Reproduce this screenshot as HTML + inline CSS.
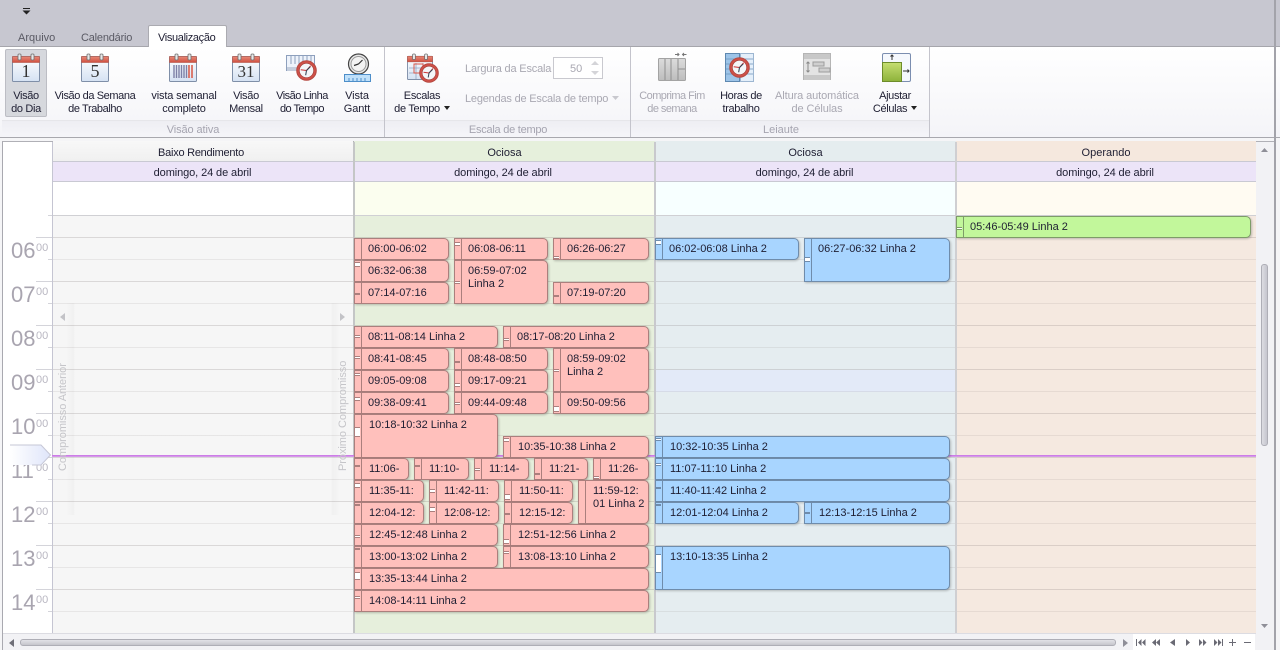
<!DOCTYPE html>
<html lang="pt"><head><meta charset="utf-8"><title>Agenda</title>
<style>
html,body{margin:0;padding:0;width:1280px;height:650px;overflow:hidden;background:#f5f5f7}
body{position:relative;font:11px/13px "Liberation Sans",sans-serif;color:#1e1e32}
div,span,svg{position:absolute;box-sizing:border-box}
.t{white-space:nowrap}
.c{text-align:center;white-space:nowrap;letter-spacing:-.35px;top:90px}
.g{color:#a9a8b2}
.cap{color:#a5a4b0;top:124px;white-space:nowrap;text-align:center}
.sep{top:47px;width:1px;height:90px;background:#c4c4cc}
.h{height:21px;text-align:center;line-height:22px;padding-top:1px;top:141px;border-bottom:1px solid #c9c9d3}
.d{height:20px;text-align:center;line-height:22px;top:162px;background:#ece4f8;border-bottom:1px solid #c9c9d3;letter-spacing:-.1px}
.a{top:182px;height:34px;border-bottom:1px solid #d0d0d4}
.b{top:216px;height:417px}
.hr{font-size:22px;line-height:22px;color:#a9a5b0;left:11px}
.mn{font-size:11px;line-height:11px;color:#b9b7c2;left:36px}
.e{height:22px;border:1px solid;border-radius:0 5px 5px 0;box-shadow:1px 1px 2px rgba(0,0,0,.22);padding:4px 0 0 13px;line-height:13px;overflow:hidden;white-space:nowrap}
.r{background:#ffc0bc;border-color:#ab7f7d}
.u{background:#a8d5ff;border-color:#6f8cab}
.n{background:#c2f79b;border-color:#7d9c68}
.e i{position:absolute;left:0;top:0;bottom:0;width:6px;border-right:1px solid;border-color:inherit;background:inherit}
.e b{position:absolute;left:0;width:5px;background:#fff;border-top:1px solid;border-bottom:1px solid;border-color:inherit;box-sizing:content-box}
.ar{position:static;display:inline-block;width:0;height:0;border:3.5px solid transparent;border-top:4px solid #222;border-bottom:0;margin-left:4px;vertical-align:2px}
</style></head><body>

<svg width="0" height="0" style="left:0;top:0">
<defs>
<linearGradient id="pg" x1="0" y1="0" x2="0" y2="1"><stop offset="0" stop-color="#fff"/><stop offset="1" stop-color="#d5e2f3"/></linearGradient>
<linearGradient id="rd" x1="0" y1="0" x2="0" y2="1"><stop offset="0" stop-color="#e88a78"/><stop offset="1" stop-color="#cf4f40"/></linearGradient>
<linearGradient id="gb" x1="0" y1="0" x2="0" y2="1"><stop offset="0" stop-color="#c6de72"/><stop offset="1" stop-color="#8db23a"/></linearGradient>
<linearGradient id="gy" x1="0" y1="0" x2="0" y2="1"><stop offset="0" stop-color="#dcdcdc"/><stop offset="1" stop-color="#bdbdbd"/></linearGradient>
<symbol id="cal" viewBox="0 0 28 29">
<rect x=".5" y="3.5" width="27" height="25" rx="1" fill="url(#pg)" stroke="#7f8fa8"/>
<rect x=".5" y="3.5" width="27" height="6" fill="url(#rd)" stroke="#b4574a" stroke-width=".6"/>
<rect x="6" y="1" width="3" height="6" rx="1" fill="#e8e8e8" stroke="#6d6d6d" stroke-width=".8"/>
<rect x="19" y="1" width="3" height="6" rx="1" fill="#e8e8e8" stroke="#6d6d6d" stroke-width=".8"/>
</symbol>
<symbol id="clk" viewBox="0 0 20 20">
<circle cx="10" cy="10" r="9.3" fill="#cf5048" stroke="#b54a42"/>
<circle cx="10" cy="10" r="6.8" fill="#f4f6f8" stroke="#a0403a" stroke-width=".6"/>
<path d="M10 10 L14 5.5 M10 10 L4.5 9.3" stroke="#c33" stroke-width="1" fill="none"/>
<path d="M10 10 L9.2 14.5 M10 10 L13.5 6.5" stroke="#345" stroke-width="1" fill="none"/>
</symbol>
</defs></svg>

<!-- title area -->
<div style="left:0;top:0;width:1280px;height:47px;background:#c7c7d0;border-bottom:1px solid #a6a6ac"></div>
<svg style="left:22px;top:8px" width="9" height="7"><path d="M1 .5H8" stroke="#222"/><path d="M.5 2.5H8.5L4.5 6.5Z" fill="#222"/></svg>
<div class="t" style="left:18px;top:32px;color:#5a5a64">Arquivo</div>
<div class="t" style="left:81px;top:32px;color:#5a5a64;letter-spacing:-.2px">Calendário</div>
<div style="left:148px;top:25px;width:79px;height:23px;background:#fff;border:1px solid #ababb1;border-bottom:0;border-radius:2px 2px 0 0"></div>
<div class="t" style="left:158px;top:32px;letter-spacing:-.35px">Visualização</div>

<!-- ribbon -->
<div style="left:0;top:47px;width:1280px;height:91px;background:linear-gradient(#fff,#f4f4f8);border-bottom:1px solid #a8a8ae"></div>
<div style="left:2px;top:120px;width:927px;height:17px;background:linear-gradient(#eeeef3,#f5f5f9);border-top:1px solid #e6e6ea"></div>
<div class="sep" style="left:384px"></div><div class="sep" style="left:630px"></div><div class="sep" style="left:929px"></div>
<div style="left:5px;top:49px;width:42px;height:68px;background:#d6d8dd;border:1px solid #bcbdc4;border-radius:2px"></div>

<svg style="left:12px;top:53px" width="28" height="29"><use href="#cal"/><text x="14" y="24" text-anchor="middle" font-family="Liberation Serif" font-size="18" fill="#333">1</text></svg>
<svg style="left:81px;top:53px" width="28" height="29"><use href="#cal"/><text x="14" y="24" text-anchor="middle" font-family="Liberation Serif" font-size="18" fill="#333">5</text></svg>
<svg style="left:169px;top:53px" width="28" height="29"><use href="#cal"/><path d="M5 12v13M7.5 12v13M10 12v13M12.5 12v13M15 12v13M17.5 12v13" stroke="#7d80a6" stroke-width="1.4"/><path d="M20 12v13M23 12v13" stroke="#d9604f" stroke-width="1.6"/></svg>
<svg style="left:232px;top:53px" width="28" height="29"><use href="#cal"/><text x="14" y="24" text-anchor="middle" font-family="Liberation Serif" font-size="17" fill="#333">31</text></svg>
<svg style="left:286px;top:53px" width="33" height="30"><rect x=".5" y="2.5" width="28" height="15" fill="#eef3fb" stroke="#8ea0bd"/><path d="M5 3v8M9 3v8M13 3v8M17 3v8M21 3v8M25 3v8" stroke="#8ea0bd"/><rect x="1" y="14" width="27" height="4" fill="#c5cedd"/><svg x="10" y="7" width="21" height="21"><use href="#clk"/></svg></svg>
<svg style="left:344px;top:53px" width="28" height="30"><circle cx="14.500" cy="11" r="10" fill="#e7e7e7" stroke="#444" stroke-width="1.200"/><circle cx="14.500" cy="11" r="7.500" fill="#f3f3f3" stroke="#999"/><path d="M14.500 11L18.500 7M14.500 11L10 12.500" stroke="#333" stroke-width="1.200" fill="none"/><rect x=".5" y="21.500" width="26" height="7" fill="#bfe0fa" stroke="#4d8ec9"/><path d="M5 25v3M9 25v3M13 25v3M17 25v3M21 25v3" stroke="#4d8ec9"/></svg>
<svg style="left:407px;top:53px" width="32" height="30"><use href="#cal" width="26" height="27"/><path d="M2 15H24M2 20H24M9 10V26M16 10V26" stroke="#93a5c2" stroke-width=".8"/><rect x="7" y="11" width="9" height="9" fill="none" stroke="#d9584a"/><svg x="12" y="10" width="20" height="20"><use href="#clk"/></svg></svg>

<div class="c" style="left:5px;width:42px">Visão<br>do Dia</div>
<div class="c" style="left:50px;width:90px;letter-spacing:-.4px">Visão da Semana<br>de Trabalho</div>
<div class="c" style="left:144px;width:80px;letter-spacing:-.15px">vista semanal<br>completo</div>
<div class="c" style="left:226px;width:40px;letter-spacing:-.3px">Visão<br>Mensal</div>
<div class="c" style="left:270px;width:64px;letter-spacing:-.5px">Visão Linha<br>do Tempo</div>
<div class="c" style="left:337px;width:40px;letter-spacing:-.1px">Vista<br>Gantt</div>
<div class="c" style="left:392px;width:60px;letter-spacing:-.3px">Escalas<br>de Tempo<span class="ar"></span></div>
<div class="cap" style="left:143px;width:100px;letter-spacing:-.1px">Visão ativa</div>
<div class="cap" style="left:458px;width:100px;letter-spacing:-.25px">Escala de tempo</div>
<div class="cap" style="left:731px;width:100px">Leiaute</div>

<div class="t g" style="left:465px;top:63px;letter-spacing:-.18px">Largura da Escala</div>
<div style="left:553px;top:57px;width:50px;height:22px;background:#fff;border:1px solid #c9c9cf"></div>
<div class="t g" style="left:570px;top:63px">50</div>
<svg style="left:590px;top:60px" width="10" height="16"><path d="M5 1L9 5H1ZM5 15L1 11H9Z" fill="#d4d4d8"/></svg>
<div class="t g" style="left:465px;top:93px;letter-spacing:-.2px">Legendas de Escala de tempo</div>
<svg style="left:611px;top:96px" width="9" height="5"><path d="M1 0H8L4.500 4Z" fill="#c8c8ce"/></svg>

<svg style="left:658px;top:52px" width="30" height="30"><path d="M17 2.500h4M19.500 1l1.500 1.500L19.500 4M28.500 2.500h-4M26 1l-1.500 1.500L26 4" stroke="#777" fill="none"/><rect x=".5" y="6.500" width="27" height="22" rx="1" fill="url(#gy)" stroke="#a3a3a3"/><path d="M7 7v21M13 7v21M20 7v21M20 17H27" stroke="#8f8f8f"/></svg>
<svg style="left:725px;top:53px" width="30" height="30"><rect x=".5" y=".5" width="14" height="28" fill="#9dc4e8" stroke="#5e88b0"/><rect x="15.500" y=".5" width="13" height="28" fill="#e4effa" stroke="#9db6d1"/><path d="M1 6H14M1 11H14M1 16H14M1 21H14M16 6H28M16 11H28M16 16H28M16 21H28" stroke="#6c93bb" stroke-width=".8"/><svg x="4" y="4" width="21" height="21"><use href="#clk"/></svg></svg>
<svg style="left:803px;top:53px" width="29" height="29"><rect x=".5" y=".5" width="27" height="26" fill="#e3e3e3" stroke="#b5b5b5"/><rect x="1" y="1" width="26" height="5" fill="#c8c8c8"/><rect x="1" y="22" width="26" height="5" fill="#c8c8c8"/><rect x="10" y="9" width="11" height="4" fill="#cfcfcf" stroke="#9c9c9c"/><rect x="16" y="15" width="11" height="4" fill="#cfcfcf" stroke="#9c9c9c"/><path d="M5 9v10M3.500 10.500L5 9l1.500 1.500M3.500 17.500L5 19l1.500-1.500" stroke="#888" fill="none"/></svg>
<svg style="left:882px;top:53px" width="30" height="30"><rect x=".5" y=".5" width="28" height="28" rx="1.500" fill="#f5f8fd" stroke="#7b8eb0"/><rect x=".5" y="9.500" width="19" height="19" fill="url(#gb)" stroke="#6d8c2a"/><path d="M10 7V2M8.500 3.500L10 2l1.500 1.500M21 18H27M25.500 16.500L27 18l-1.500 1.500" stroke="#333" fill="none"/></svg>

<div class="c g" style="left:632px;width:80px;letter-spacing:-.55px">Comprima Fim<br>de semana</div>
<div class="c" style="left:711px;width:60px">Horas de<br>trabalho</div>
<div class="c g" style="left:767px;width:100px;letter-spacing:-.1px">Altura automática<br>de Células</div>
<div class="c" style="left:865px;width:60px">Ajustar<br>Células<span class="ar"></span></div>

<!-- frame -->
<div style="left:2px;top:141px;width:1272px;height:509px;background:#fff;border-left:1px solid #a9a9b0;border-top:1px solid #b0b0b6"></div>
<div style="left:1274px;top:0;width:2px;height:650px;background:#a3a3aa"></div>
<div style="left:1256px;top:142px;width:18px;height:508px;background:#f2f2f5"></div>
<div style="left:3px;top:633px;width:1253px;height:17px;background:#f2f2f5;border-top:1px solid #dcdce2"></div>

<!-- column headers -->
<div class="h" style="left:53px;width:300px;background:linear-gradient(#f8f8f8,#f0f0f0);letter-spacing:-.25px;padding-right:4px">Baixo Rendimento</div>
<div class="h" style="left:354px;width:301px;background:#e6f0dc">Ociosa</div>
<div class="h" style="left:655px;width:301px;background:#e5edef">Ociosa</div>
<div class="h" style="left:956px;width:300px;background:#f5e8de">Operando</div>
<div class="d" style="left:53px;width:301px;padding-right:2px">domingo, 24 de abril</div>
<div class="d" style="left:354px;width:301px;padding-right:3px">domingo, 24 de abril</div>
<div class="d" style="left:655px;width:301px;padding-right:2px">domingo, 24 de abril</div>
<div class="d" style="left:956px;width:300px;padding-right:2px">domingo, 24 de abril</div>
<div class="a" style="left:53px;width:301px;background:#fff"></div>
<div class="a" style="left:354px;width:301px;background:#fbfeef"></div>
<div class="a" style="left:655px;width:301px;background:#f7ffff"></div>
<div class="a" style="left:956px;width:300px;background:#fffbf2"></div>

<!-- column bodies -->
<div class="b" style="left:53px;width:301px;background:#f6f6f6"></div>
<div class="b" style="left:354px;width:301px;background:#e6efdc"></div>
<div class="b" style="left:655px;width:301px;background:#e5edf0"></div>
<div class="b" style="left:956px;width:300px;background:#f5e9e0"></div>
<div style="left:656px;top:370px;width:299px;height:22px;background:#e3eaf8"></div>

<!-- grid lines -->
<div style="left:53px;top:216px;width:1203px;height:417px;background:repeating-linear-gradient(to bottom,transparent 0,transparent 21px,rgba(120,110,110,.22) 21px,rgba(120,110,110,.22) 22px,transparent 22px,transparent 43px,rgba(120,110,110,.12) 43px,rgba(120,110,110,.12) 44px)"></div>
<div style="left:48px;top:215px;width:5px;height:1px;background:#d4d4da"></div>
<div style="left:36px;top:237px;width:17px;height:1px;background:#d4d4da"></div><div style="left:48px;top:259px;width:5px;height:1px;background:#d4d4da"></div>
<div style="left:36px;top:281px;width:17px;height:1px;background:#d4d4da"></div><div style="left:48px;top:303px;width:5px;height:1px;background:#d4d4da"></div>
<div style="left:36px;top:325px;width:17px;height:1px;background:#d4d4da"></div><div style="left:48px;top:347px;width:5px;height:1px;background:#d4d4da"></div>
<div style="left:36px;top:369px;width:17px;height:1px;background:#d4d4da"></div><div style="left:48px;top:391px;width:5px;height:1px;background:#d4d4da"></div>
<div style="left:36px;top:413px;width:17px;height:1px;background:#d4d4da"></div><div style="left:48px;top:435px;width:5px;height:1px;background:#d4d4da"></div>
<div style="left:36px;top:457px;width:17px;height:1px;background:#d4d4da"></div><div style="left:48px;top:479px;width:5px;height:1px;background:#d4d4da"></div>
<div style="left:36px;top:501px;width:17px;height:1px;background:#d4d4da"></div><div style="left:48px;top:523px;width:5px;height:1px;background:#d4d4da"></div>
<div style="left:36px;top:545px;width:17px;height:1px;background:#d4d4da"></div><div style="left:48px;top:567px;width:5px;height:1px;background:#d4d4da"></div>
<div style="left:36px;top:589px;width:17px;height:1px;background:#d4d4da"></div><div style="left:48px;top:611px;width:5px;height:1px;background:#d4d4da"></div>

<!-- column dividers -->
<div style="left:52px;top:142px;width:1px;height:491px;background:#c5c5d2"></div>
<div style="left:353px;top:142px;width:2px;height:491px;background:#c4c6c6"></div>
<div style="left:654px;top:142px;width:2px;height:491px;background:#c8c9cd"></div>
<div style="left:955px;top:142px;width:2px;height:491px;background:#cfcfd2"></div>

<!-- hours -->
<div class="hr" style="top:240px">06</div><div class="mn" style="top:243px">00</div>
<div class="hr" style="top:284px">07</div><div class="mn" style="top:287px">00</div>
<div class="hr" style="top:328px">08</div><div class="mn" style="top:331px">00</div>
<div class="hr" style="top:372px">09</div><div class="mn" style="top:375px">00</div>
<div class="hr" style="top:416px">10</div><div class="mn" style="top:419px">00</div>
<div class="hr" style="top:460px">11</div><div class="mn" style="top:463px">00</div>
<div class="hr" style="top:504px">12</div><div class="mn" style="top:507px">00</div>
<div class="hr" style="top:548px">13</div><div class="mn" style="top:551px">00</div>
<div class="hr" style="top:592px">14</div><div class="mn" style="top:595px">00</div>

<!-- nav panels -->
<div style="left:53px;top:303px;width:22px;height:212px;background:linear-gradient(to right,transparent 60%,rgba(0,0,0,.025) 92%,transparent)"></div>
<div style="left:331px;top:303px;width:22px;height:212px;background:linear-gradient(to left,transparent 60%,rgba(0,0,0,.025) 92%,transparent)"></div>
<svg style="left:60px;top:313px" width="6" height="9"><path d="M5 0V8L0 4Z" fill="#c3c3c7"/></svg>
<svg style="left:339px;top:313px" width="6" height="9"><path d="M1 0V8L6 4Z" fill="#c3c3c7"/></svg>

<!-- time marker -->
<svg style="left:10px;top:444px" width="42" height="22"><defs><linearGradient id="mk"><stop offset="0" stop-color="#fff"/><stop offset="1" stop-color="#dfe5fa"/></linearGradient></defs><path d="M0 1H31L40.500 11L31 21H0Z" fill="url(#mk)"/><path d="M0 1H31L40.500 11L31 21H22" fill="none" stroke="#c6c7d6"/></svg>
<div style="left:52px;top:455px;width:1204px;height:2px;background:linear-gradient(#c76fe6,#d9a6ea)"></div>
<div class="t" style="left:9.500px;top:411px;width:107px;color:#c5c5c9;transform:rotate(-90deg);transform-origin:center;letter-spacing:-.05px">Compromisso Anterior</div>
<div class="t" style="left:289.500px;top:411px;width:107px;color:#c5c5c9;transform:rotate(-90deg);transform-origin:center;letter-spacing:-.05px">Próximo Compromisso</div>

<!-- events -->
<div class="e r" style="left:354px;top:238px;width:95px">06:00-06:02<i></i></div>
<div class="e r" style="left:354px;top:260px;width:95px">06:32-06:38<i><b style="top:1px;height:3px"></b></i></div>
<div class="e r" style="left:354px;top:282px;width:95px">07:14-07:16<i><b style="top:10px;height:0"></b></i></div>
<div class="e r" style="left:454px;top:238px;width:94px">06:08-06:11<i><b style="top:3px;height:2px"></b></i></div>
<div class="e r" style="left:454px;top:260px;width:94px;height:44px;white-space:normal">06:59-07:02 Linha 2<i><b style="top:20px;height:1px"></b></i></div>
<div class="e r" style="left:553px;top:238px;width:96px">06:26-06:27<i><b style="top:17px;height:1px"></b></i></div>
<div class="e r" style="left:553px;top:282px;width:96px">07:19-07:20<i><b style="top:12px;height:0"></b></i></div>
<div class="e r" style="left:354px;top:326px;width:144px">08:11-08:14 Linha 2<i><b style="top:8px;height:1px"></b></i></div>
<div class="e r" style="left:503px;top:326px;width:146px">08:17-08:20 Linha 2<i><b style="top:11px;height:1px"></b></i></div>
<div class="e r" style="left:354px;top:348px;width:95px">08:41-08:45<i><b style="top:7px;height:1px"></b></i></div>
<div class="e r" style="left:454px;top:348px;width:94px">08:48-08:50<i><b style="top:12px;height:0"></b></i></div>
<div class="e r" style="left:553px;top:348px;width:96px;height:44px;white-space:normal">08:59-09:02 Linha 2<i><b style="top:20px;height:1px"></b></i></div>
<div class="e r" style="left:354px;top:370px;width:95px">09:05-09:08<i><b style="top:2px;height:1px"></b></i></div>
<div class="e r" style="left:454px;top:370px;width:94px">09:17-09:21<i><b style="top:12px;height:2px"></b></i></div>
<div class="e r" style="left:354px;top:392px;width:95px">09:38-09:41<i><b style="top:4px;height:2px"></b></i></div>
<div class="e r" style="left:454px;top:392px;width:94px">09:44-09:48<i><b style="top:9px;height:1px"></b></i></div>
<div class="e r" style="left:553px;top:392px;width:96px">09:50-09:56<i><b style="top:13px;height:4px"></b></i></div>
<div class="e r" style="left:354px;top:414px;width:144px;height:44px;padding-left:14px">10:18-10:32 Linha 2<i><b style="top:12px;height:8px"></b></i></div>
<div class="e r" style="left:503px;top:436px;width:146px;padding-left:14px">10:35-10:38 Linha 2<i><b style="top:1px;height:2px"></b></i></div>
<div class="e r" style="left:354px;top:458px;width:55px;padding-left:14px">11:06-<i><b style="top:6px;height:0"></b></i></div>
<div class="e r" style="left:414px;top:458px;width:55px;padding-left:14px">11:10-<i><b style="top:6px;height:0"></b></i></div>
<div class="e r" style="left:474px;top:458px;width:55px;padding-left:14px">11:14-<i><b style="top:9px;height:1px"></b></i></div>
<div class="e r" style="left:534px;top:458px;width:54px;padding-left:14px">11:21-<i><b style="top:14px;height:0"></b></i></div>
<div class="e r" style="left:593px;top:458px;width:56px;padding-left:14px">11:26-<i><b style="top:17px;height:1px"></b></i></div>
<div class="e r" style="left:354px;top:480px;width:70px;padding-left:14px">11:35-11:<i><b style="top:2px;height:3px"></b></i></div>
<div class="e r" style="left:429px;top:480px;width:70px;padding-left:14px">11:42-11:<i><b style="top:8px;height:2px"></b></i></div>
<div class="e r" style="left:504px;top:480px;width:69px;padding-left:14px">11:50-11:<i><b style="top:13px;height:4px"></b></i></div>
<div class="e r" style="left:578px;top:480px;width:71px;height:44px;padding-left:14px">11:59-12:<br>01 Linha 2<i></i></div>
<div class="e r" style="left:354px;top:502px;width:70px;padding-left:14px">12:04-12:<i><b style="top:1px;height:0"></b></i></div>
<div class="e r" style="left:429px;top:502px;width:70px;padding-left:14px">12:08-12:<i><b style="top:4px;height:3px"></b></i></div>
<div class="e r" style="left:504px;top:502px;width:69px;padding-left:14px">12:15-12:<i><b style="top:10px;height:0"></b></i></div>
<div class="e r" style="left:354px;top:524px;width:144px;padding-left:14px">12:45-12:48 Linha 2<i><b style="top:10px;height:1px"></b></i></div>
<div class="e r" style="left:503px;top:524px;width:146px;padding-left:14px">12:51-12:56 Linha 2<i><b style="top:14px;height:3px"></b></i></div>
<div class="e r" style="left:354px;top:546px;width:144px;padding-left:14px">13:00-13:02 Linha 2<i><b style="top:1px;height:0"></b></i></div>
<div class="e r" style="left:503px;top:546px;width:146px;padding-left:14px">13:08-13:10 Linha 2<i><b style="top:4px;height:1px"></b></i></div>
<div class="e r" style="left:354px;top:568px;width:295px;padding-left:14px">13:35-13:44 Linha 2<i><b style="top:3px;height:6px"></b></i></div>
<div class="e r" style="left:354px;top:590px;width:295px;padding-left:14px">14:08-14:11 Linha 2<i><b style="top:5px;height:1px"></b></i></div>

<div class="e u" style="left:655px;top:238px;width:144px">06:02-06:08 Linha 2<i><b style="top:1px;height:3px"></b></i></div>
<div class="e u" style="left:804px;top:238px;width:146px;height:44px">06:27-06:32 Linha 2<i><b style="top:18px;height:3px"></b></i></div>
<div class="e u" style="left:655px;top:436px;width:295px;padding-left:14px">10:32-10:35 Linha 2<i><b style="top:1px;height:1px"></b></i></div>
<div class="e u" style="left:655px;top:458px;width:295px;padding-left:14px">11:07-11:10 Linha 2<i><b style="top:4px;height:1px"></b></i></div>
<div class="e u" style="left:655px;top:480px;width:295px;padding-left:14px">11:40-11:42 Linha 2<i><b style="top:6px;height:0"></b></i></div>
<div class="e u" style="left:655px;top:502px;width:144px;padding-left:14px">12:01-12:04 Linha 2<i><b style="top:1px;height:0"></b></i></div>
<div class="e u" style="left:804px;top:502px;width:146px;padding-left:14px">12:13-12:15 Linha 2<i><b style="top:9px;height:0"></b></i></div>
<div class="e u" style="left:655px;top:546px;width:295px;height:44px;padding-left:14px">13:10-13:35 Linha 2<i><b style="top:7px;height:17px"></b></i></div>
<div class="e n" style="left:956px;top:216px;width:295px;height:22px">05:46-05:49 Linha 2<i><b style="top:10px;height:1px"></b></i></div>

<!-- scrollbars -->
<svg style="left:1261px;top:148px" width="7" height="4"><path d="M3.500 0L7 4H0Z" fill="#8f8f98"/></svg>
<div style="left:1261px;top:264px;width:7px;height:182px;background:linear-gradient(to right,#dcdce2,#c6c6ce);border:1px solid #aeaeb6;border-radius:3px"></div>
<svg style="left:1261px;top:624px" width="7" height="4"><path d="M0 0H7L3.500 4Z" fill="#8f8f98"/></svg>
<svg style="left:9px;top:639px" width="5" height="8"><path d="M5 0V8L0 4Z" fill="#6f6f78"/></svg>
<div style="left:20px;top:639px;width:1096px;height:7px;background:linear-gradient(#e2e2e7,#c5c5cc);border:1px solid #aeaeb6;border-radius:3px"></div>
<svg style="left:1123px;top:639px" width="5" height="8"><path d="M0 0V8L5 4Z" fill="#8f8f98"/></svg>
<div style="left:1133px;top:634px;width:122px;height:16px;background:#fff"></div>
<svg style="left:1133px;top:634px" width="122" height="16" fill="#6a6a74">
<path d="M3 5h1v7h-1zM8.500 5v7l-3.500-3.500zM12.500 5v7l-3.500-3.500z"/>
<path d="M23 5v7l-4-3.500zM27 5v7l-4-3.500z"/>
<path d="M42 5v7l-5-3.500z"/>
<path d="M53 5v7l4-3.500z"/>
<path d="M66 5v7l3.500-3.500zM70 5v7l3.500-3.500z"/>
<path d="M81 5v7l3.500-3.500zM85 5v7l3.500-3.500zM89 5h1v7h-1z"/>
<path d="M96 8h7v1h-7zM99 5h1v7h-1z"/>
<path d="M111 8h7v1h-7z"/>
</svg>
</body></html>
